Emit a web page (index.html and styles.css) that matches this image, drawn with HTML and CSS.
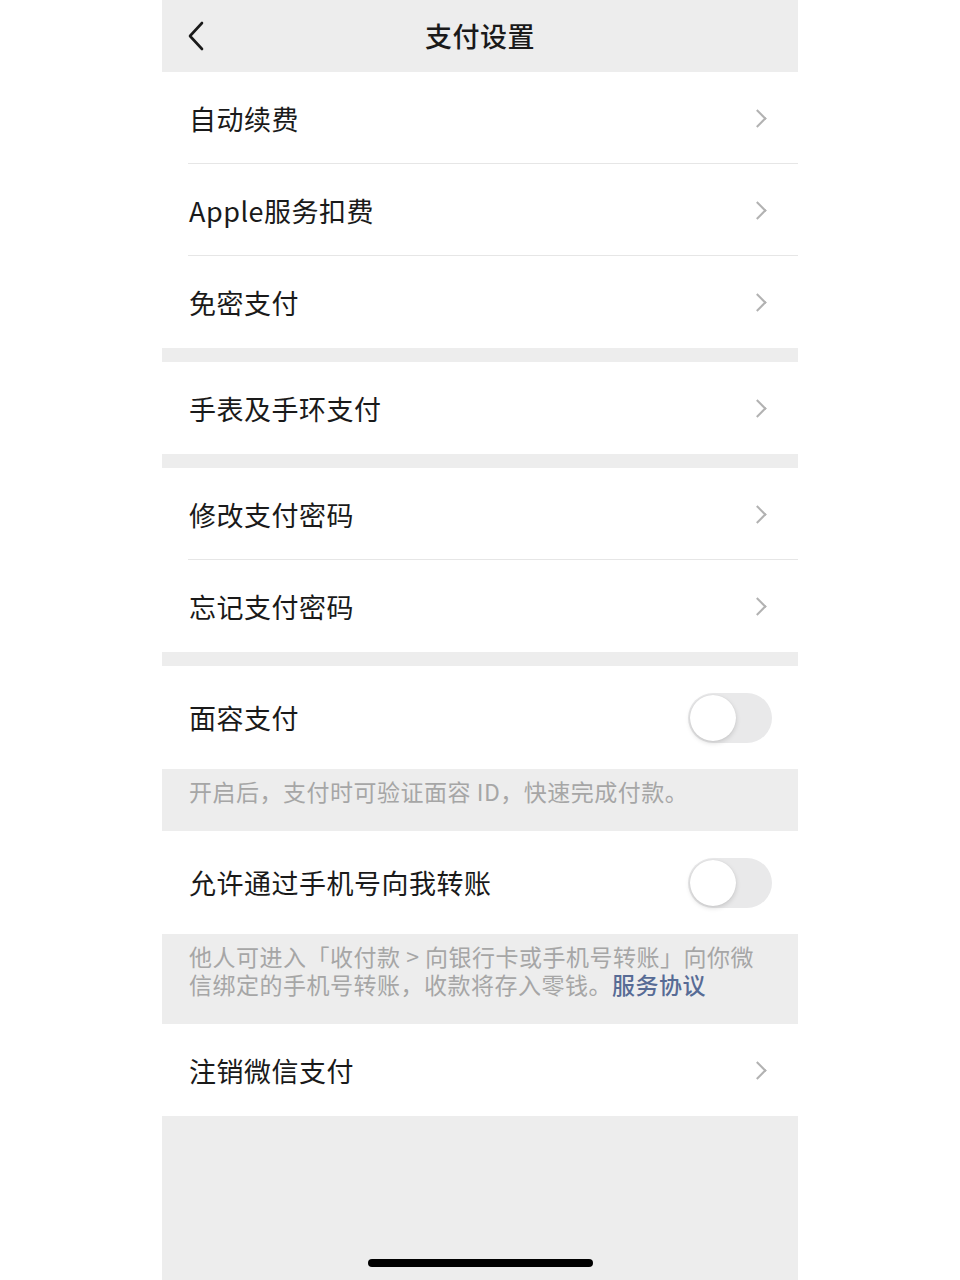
FILE: index.html
```html
<!DOCTYPE html>
<html lang="zh-CN">
<head>
  <meta charset="UTF-8">
  <meta name="viewport" content="width=device-width, initial-scale=1.0">
  <title>支付设置</title>
  <link rel="stylesheet" href="styles.css">
</head>
<body>

  <div class="page">
    <div class="navbar">
      <span class="back">
        <svg width="18" height="30" viewBox="0 0 18 30"><path d="M15 2 L3 15 L15 28" fill="none" stroke="#1a1a1a" stroke-width="2.6" stroke-linecap="round" stroke-linejoin="round"/></svg>
      </span>
      <h1 class="title">支付设置</h1>
    </div>

    <div class="group">
      <div class="cell">
        <span class="label">自动续费</span>
        <span class="arrow"></span>
      </div>
      <div class="cell">
        <span class="label">Apple服务扣费</span>
        <span class="arrow"></span>
      </div>
      <div class="cell">
        <span class="label">免密支付</span>
        <span class="arrow"></span>
      </div>
    </div>

    <div class="group">
      <div class="cell">
        <span class="label">手表及手环支付</span>
        <span class="arrow"></span>
      </div>
    </div>

    <div class="group">
      <div class="cell">
        <span class="label">修改支付密码</span>
        <span class="arrow"></span>
      </div>
      <div class="cell">
        <span class="label">忘记支付密码</span>
        <span class="arrow"></span>
      </div>
    </div>

    <div class="group switch-group">
      <div class="cell cell-switch">
        <span class="label">面容支付</span>
        <span class="switch"><span class="knob"></span></span>
      </div>
    </div>
    <p class="tips">开启后，支付时可验证面容 ID，快速完成付款。</p>

    <div class="group switch-group">
      <div class="cell cell-switch">
        <span class="label">允许通过手机号向我转账</span>
        <span class="switch"><span class="knob"></span></span>
      </div>
    </div>
    <p class="tips">他人可进入「收付款 &gt; 向银行卡或手机号转账」向你微信绑定的手机号转账，收款将存入零钱。<a class="link" href="#">服务协议</a></p>

    <div class="group no-gap">
      <div class="cell">
        <span class="label">注销微信支付</span>
        <span class="arrow"></span>
      </div>
    </div>

    <div class="bottom">
      <span class="home-bar"></span>
    </div>
  </div>

</body>
</html>
```

FILE: styles.css
```css
body {
  margin: 0;
  background-color: #ffffff;
  font-family: "Noto Sans CJK SC", "Noto Sans", sans-serif;
}

.page {
  width: 636px;
  min-height: 1280px;
  margin: 0 auto;
  background-color: #ededed;
  display: flex;
  flex-direction: column;
}

.navbar {
  height: 72px;
  display: flex;
  align-items: center;
  justify-content: center;
  position: relative;
}

.back {
  position: absolute;
  left: 25px;
  top: 21px;
  display: flex;
}

.title {
  margin: 0 0 2px 0;
  font-size: 27px;
  font-weight: 500;
  color: #1a1a1a;
  letter-spacing: 0.5px;
}

.group {
  background-color: #ffffff;
  margin-bottom: 14px;
}

.group.switch-group,
.group.no-gap {
  margin-bottom: 0;
}

.cell {
  height: 92px;
  display: flex;
  align-items: center;
  justify-content: space-between;
  padding: 0 30px 0 27px;
  position: relative;
}

.cell + .cell::before {
  content: "";
  position: absolute;
  top: -1px;
  left: 26px;
  right: 0;
  height: 1px;
  background-color: #e6e6e6;
}

.cell-switch {
  height: 103px;
  padding-right: 26px;
}

.label {
  font-size: 27px;
  color: #1a1a1a;
  letter-spacing: 0.5px;
}

.arrow {
  width: 11px;
  height: 11px;
  border-top: 2px solid #b2b2b2;
  border-right: 2px solid #b2b2b2;
  transform: rotate(45deg);
  margin-right: 4px;
}

.switch {
  width: 84px;
  height: 50px;
  border-radius: 25px;
  background-color: #e9e9ea;
  display: flex;
  align-items: center;
  padding: 2px;
  box-sizing: border-box;
}

.knob {
  width: 46px;
  height: 46px;
  border-radius: 50%;
  background-color: #ffffff;
  box-shadow: 0 2px 5px rgba(0, 0, 0, 0.15), 0 0 1px rgba(0, 0, 0, 0.1);
}

.tips {
  margin: 0;
  padding: 8px 27px 26px 27px;
  font-size: 23px;
  line-height: 28px;
  letter-spacing: 0.5px;
  color: #a6a6a6;
}

.link {
  color: #576b95;
  text-decoration: none;
  font-weight: 500;
}

.bottom {
  flex: 1;
  display: flex;
  align-items: flex-end;
  justify-content: center;
  padding-bottom: 13px;
}

.home-bar {
  width: 225px;
  height: 8px;
  border-radius: 4px;
  background-color: #000000;
}
```
